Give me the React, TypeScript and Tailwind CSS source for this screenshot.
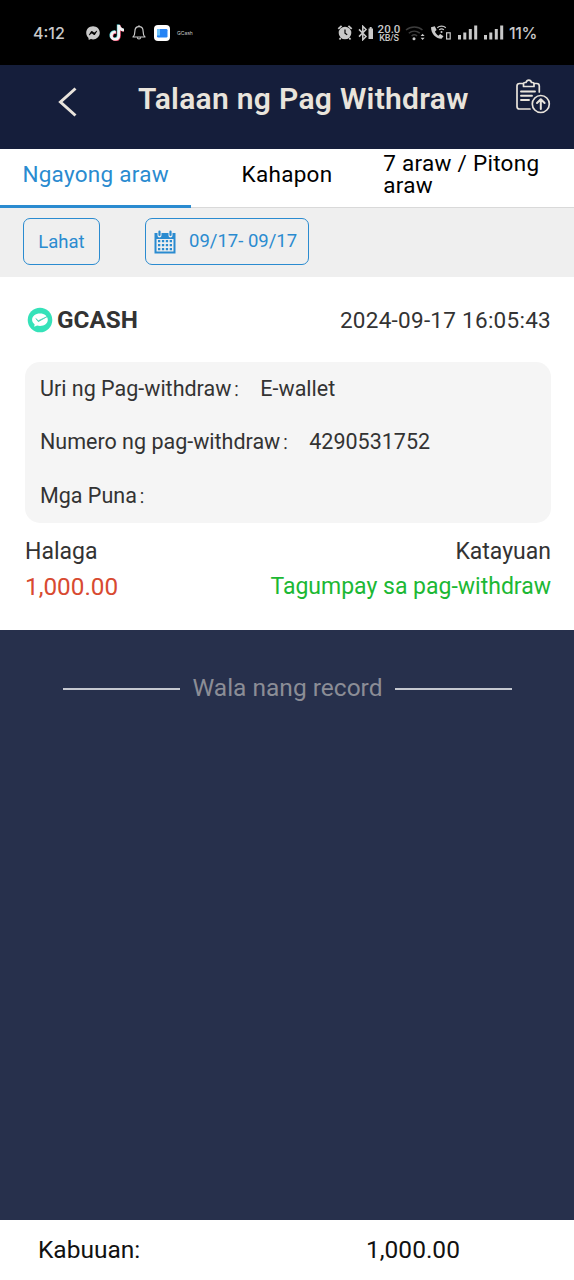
import { useState } from "react";
import { FaFacebookMessenger, FaTiktok } from "react-icons/fa6";

const tabs = [
  { label: "Ngayong araw", className: "items-center" },
  { label: "Kahapon", className: "items-center" },
  { label: "7 araw / Pitong araw", className: "items-start" },
];

const details = [
  { label: "Uri ng Pag-withdraw", value: "E-wallet" },
  { label: "Numero ng pag-withdraw", value: "4290531752" },
  { label: "Mga Puna", value: "" },
];

function SignalBars() {
  return (
    <svg width="20" height="15" viewBox="0 0 20 15" fill="currentColor">
      <rect x="0" y="10" width="3" height="4.5" />
      <rect x="5.3" y="7.5" width="3" height="7" />
      <rect x="10.8" y="4" width="3" height="10.5" />
      <rect x="16.2" y="0.5" width="3" height="14" />
    </svg>
  );
}

function StatusBar() {
  return (
    <div className="flex h-[65px] items-center bg-black pl-[33px] text-[#c9c9c9]">
      <span className="w-[53px] shrink-0 font-['Inter',sans-serif] text-[16px] leading-5 font-medium">4:12</span>
      <FaFacebookMessenger className="size-[14px] shrink-0" />
      <svg className="ml-2 shrink-0" width="16" height="17" viewBox="0 0 16 17">
        <FaTiktok x="0.4" y="0.3" width="15" height="15" color="#58d5da" />
        <FaTiktok x="1.6" y="1.3" width="15" height="15" color="#e5375d" />
        <FaTiktok x="1" y="0.8" width="15" height="15" color="#f4f4f4" />
      </svg>
      {/* Bell */}
      <svg className="ml-2 shrink-0" width="14" height="16" viewBox="0 0 14 16" fill="none" stroke="currentColor" strokeWidth="1.2">
        <path d="M1 12h12c-1.5-1.3-1.9-2.5-1.9-5.8C11.1 3.4 9.4 1.6 7 1.6S2.9 3.4 2.9 6.2C2.9 9.5 2.5 10.7 1 12Z" strokeLinejoin="round" />
        <path d="M5.4 12.2c0 2.4 3.2 2.4 3.2 0M7 .3v1.3" />
      </svg>
      <svg className="ml-2 shrink-0" width="16" height="16" viewBox="0 0 16 16">
        <rect width="16" height="16" rx="4" fill="#fff" />
        <rect x="3" y="4" width="10.5" height="8.5" rx="1.2" fill="#2684f5" />
        <path d="M3 4h3v6.5H3z" fill="#6cc2fb" />
      </svg>
      <span className="ml-[7px] w-[160px] shrink-0 font-['Inter',sans-serif] text-[5px] leading-3">GCash</span>

      <svg className="shrink-0" width="16" height="17" viewBox="0 0 16 17" fill="currentColor">
        <circle cx="8" cy="9" r="6.3" />
        <path d="M1.3 4.8 4.6 1.8M14.7 4.8l-3.3-3M3.7 14 2.5 15.5M12.3 14l1.2 1.5" stroke="currentColor" strokeWidth="1.8" />
        <path d="M8 5.5v3.8l2.2 1.5" fill="none" stroke="#000" strokeWidth="1.2" />
      </svg>
      <svg className="ml-[5px] shrink-0" width="16" height="16" viewBox="0 0 16 16">
        <path d="m1 4.4 7 7L4.8 14.7V1.3L8 4.6l-7 7" fill="none" stroke="currentColor" strokeWidth="1.5" />
        <path d="M10.5 3.5h1.2V2h2v1.500h1.300V14h-4.500z" fill="currentColor" />
      </svg>
      <div className="mt-[3px] ml-[3px] flex w-6 shrink-0 flex-col items-center font-medium">
        <span className="text-[11.5px] leading-[9px]">20.0</span>
        <span className="h-[9px] text-[9px] leading-[9px] tracking-[-0.2px]">KB/S</span>
      </div>
      <svg className="ml-1 shrink-0" width="21" height="16" viewBox="0 0 21 16" fill="none">
        <path d="M1 5c4.8-4 12-4 16.5 0M3.8 8.2c3.2-2.7 7.7-2.7 11 0M6.6 11c1.6-1.4 3.9-1.4 5.5 0" stroke="#3d3d3d" strokeWidth="1.5" />
        <circle cx="9" cy="13.7" r="1.5" fill="currentColor" />
        <path d="m15.6 11 2-2.3 2 2.3zM15.6 12.8l2 2.3 2-2.3z" fill="currentColor" />
      </svg>
      <svg className="ml-1 shrink-0" width="22" height="17" viewBox="0 0 22 17" fill="none" stroke="currentColor">
        <path d="M1 3.2c.2 6.3 4.2 11 10.5 11.6l2-2.5-3.3-2.2-1.9 1.6C6.7 10.7 5.5 9.2 5 7.5l1.6-1.6-1.8-3.7z" fill="currentColor" stroke="none" />
        <path d="M7.3 3.7c2.3-2 6.2-2 8.5 0M9.2 5.9c1.3-1.1 3.4-1.1 4.7 0" strokeWidth="1.2" />
        <circle cx="11.5" cy="8" r="1" fill="currentColor" stroke="none" />
        <rect x="16.6" y="8.8" width="3.6" height="6.2" strokeWidth="1.2" />
      </svg>
      <div className="ml-[6px] flex shrink-0 gap-[6px]">
        <SignalBars />
        <SignalBars />
      </div>
      <span className="ml-[5px] font-['Inter',sans-serif] text-[16px] leading-5 font-medium tracking-[-0.4px]">11%</span>
    </div>
  );
}

function Header() {
  return (
    <header className="flex h-[84px] bg-[#151e3b] text-[#e9e4dc]">
      <button className="mt-[21px] ml-[58px] h-8 w-5 shrink-0">
        <svg width="20" height="32" viewBox="0 0 20 32" fill="none" stroke="currentColor" strokeWidth="3">
          <path d="M17.5 2.5 2.5 16l15 13.5" />
        </svg>
      </button>
      <h1 className="mt-[16px] ml-[60px] w-[378px] shrink-0 text-[30px] leading-9 font-semibold tracking-[0.3px] whitespace-nowrap">
        Talaan ng Pag Withdraw
      </h1>
      <svg className="mt-[14px] shrink-0" width="35" height="35" viewBox="0 0 35 35" fill="none" stroke="currentColor" strokeWidth="1.7" strokeLinecap="round" strokeLinejoin="round">
        <path d="M7 4.5H3.5Q1 4.5 1 7v20.5Q1 30 3.5 30H14M18.5 4.5h2.3q2.5 0 2.5 2.5v6" />
        <path d="M7.5 7.5V5q0-1.5 1.5-1.5h1q.7-2.3 2.8-2.3t2.7 2.3h1q1.5 0 1.5 1.5v2.5z" />
        <path d="M5 12.5h14M5 16.800h11M5 21h8" strokeWidth="1.9" />
        <circle cx="24.8" cy="25" r="8.5" />
        <path d="M24.8 30v-9.500M21 24l3.800-3.800 3.800 3.800" strokeWidth="2" />
      </svg>
    </header>
  );
}

function CalendarIcon() {
  return (
    <svg width="22" height="24" viewBox="0 0 22 24" fill="none">
      <path d="M.5 3h21v20.500H.5z" fill="#2a8bd0" />
      <path d="M2.500 9h17v12.500h-17z" fill="#efefef" />
      <path d="M5.500 0v5.500M16.500 0v5.500" stroke="#efefef" strokeWidth="4" strokeLinecap="round" />
      <path d="M5.500 1.500v3.500M16.500 1.500v3.500" stroke="#2a8bd0" strokeWidth="2.200" strokeLinecap="round" />
      <path d="M4 11.200h14M4 15.200h14M4 19.200h14" stroke="#2a8bd0" strokeWidth="2.300" strokeDasharray="2.300 1.600" />
    </svg>
  );
}

function GCashLogo() {
  return (
    <svg width="26" height="26" viewBox="0 0 26 26" fill="none">
      <circle cx="13" cy="13" r="12.3" fill="#35e2b9" />
      <path d="M13 6.500c4.500 0 7.800 2.600 7.800 6.200s-3.300 6.200-7.800 6.200c-1 0-2-.1-2.900-.4L7.200 19.700l.4-2.500c-1.600-1.200-2.500-2.700-2.500-4.500C5.100 9.100 8.500 6.500 13 6.500Z" fill="#fff" />
      <path d="m8.800 11.500 2.500 2.200 9-4.200-9 5.200z" fill="#35cfae" stroke="#35cfae" strokeWidth=".6" />
    </svg>
  );
}

export default function App() {
  const [activeTab, setActiveTab] = useState(0);

  return (
    <div className="flex h-[1280px] w-[574px] flex-col overflow-hidden bg-[#27304c] font-['Roboto','Noto_Sans_CJK_SC',sans-serif] text-[#333]">
      <StatusBar />
      <Header />

      {/* Date range tabs */}
      <nav className="grid h-[59px] shrink-0 grid-cols-3 border-b border-[#d9d9d9] bg-white">
        {tabs.map((tab, i) => (
          <button
            key={tab.label}
            onClick={() => setActiveTab(i)}
            className={`-mb-px flex justify-center border-b-[3px] text-[22.5px] leading-[22px] tracking-[0.27px] ${tab.className} ${
              activeTab === i ? "border-[#2a8bd0] text-[#2a8bd0]" : "border-transparent text-black"
            }`}
          >
            <span className={i === 2 ? "mt-[3px] w-[190px] text-left" : "mb-[7px]"}>{tab.label}</span>
          </button>
        ))}
      </nav>

      {/* Filters */}
      <div className="flex h-[69px] shrink-0 items-start gap-[45px] bg-[#efefef] pt-[10px] pl-[23px] text-[18.5px] text-[#2a8bd0]">
        <button className="h-[47px] w-[77px] rounded-[7px] border border-[#2a8bd0] pt-[2px]">Lahat</button>
        <button className="flex h-[47px] w-[164px] items-center rounded-[7px] border border-[#2a8bd0] pl-[8px] whitespace-nowrap">
          <CalendarIcon />
          <span className="ml-[13px]">09/17- 09/17</span>
        </button>
      </div>

      {/* Withdrawal record */}
      <section className="h-[353px] shrink-0 bg-white pt-[30px] pr-[23px] pl-[25px]">
        <div className="flex h-[26px] items-center justify-between">
          <div className="flex items-center gap-[4px] pl-[2px]">
            <GCashLogo />
            <span className="text-[24.3px] font-bold">GCASH</span>
          </div>
          <span className="pt-[2px] text-[22.5px] tracking-[0.27px]">2024-09-17 16:05:43</span>
        </div>
        <dl className="mt-[29px] h-[161px] rounded-[15px] bg-[#f5f5f5] pl-[15px] text-[21.5px]">
          {details.map((row) => (
            <div key={row.label} className="flex h-[53.5px] items-center whitespace-nowrap">
              <dt className="flex items-center">
                {row.label}
                <span className="w-[22px] pt-[3px] pl-px text-[17px] font-light">：</span>
              </dt>
              <dd className="ml-[7px]">{row.value}</dd>
            </div>
          ))}
        </dl>
        <div className="mt-[11px] flex justify-between text-[23px] leading-[35px]">
          <div>
            <p>Halaga</p>
            <p className="text-[24.3px] text-[#d84a31]">1,000.00</p>
          </div>
          <div className="text-right">
            <p>Katayuan</p>
            <p className="text-[#1cb834]">Tagumpay sa pag-withdraw</p>
          </div>
        </div>
      </section>

      <div className="flex flex-1 items-start justify-center gap-[12px] pt-[40px] pl-px text-[24.5px] leading-9 text-[#8b8d96]">
        <div className="mt-[18px] h-[2px] w-[117px] bg-[#c5c8d0]" />
        <span>Wala nang record</span>
        <div className="mt-[18px] h-[2px] w-[117px] bg-[#c5c8d0]" />
      </div>

      <footer className="flex h-[60px] shrink-0 items-center bg-white pt-px pl-[38px] text-[24.5px] text-[#111]">
        <span className="w-[328px]">Kabuuan:</span>
        <span>1,000.00</span>
      </footer>
    </div>
  );
}
